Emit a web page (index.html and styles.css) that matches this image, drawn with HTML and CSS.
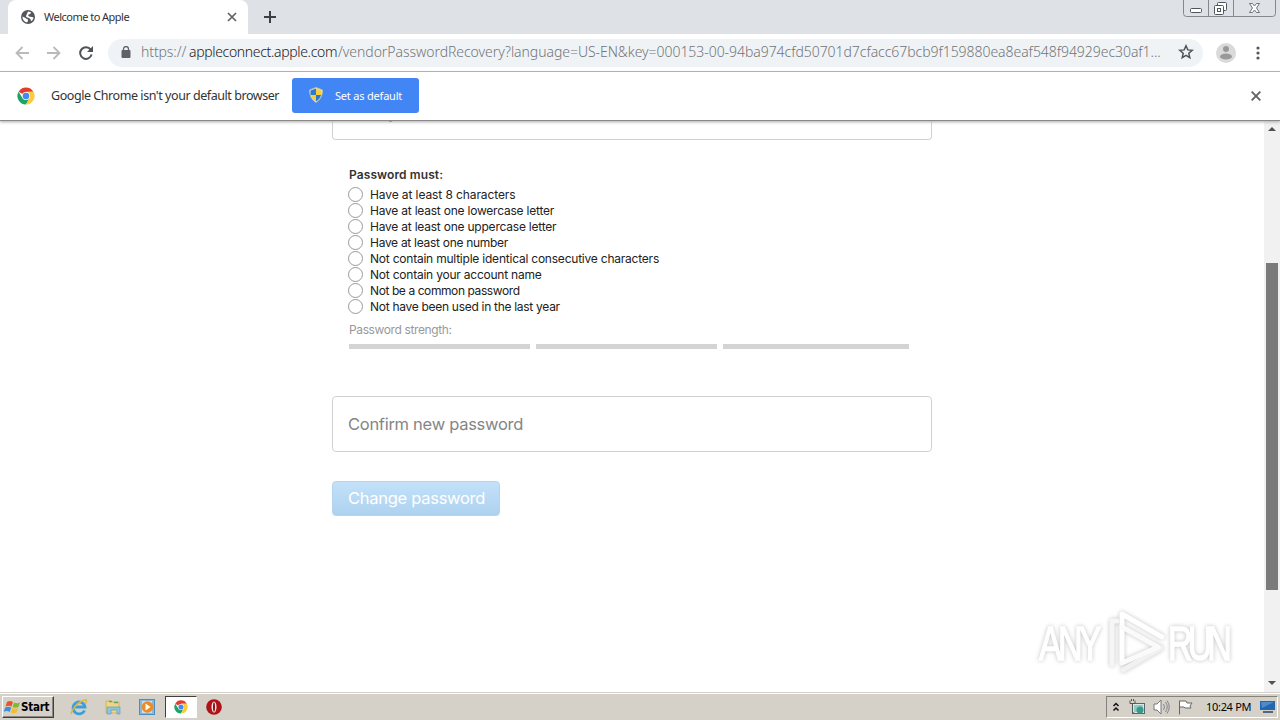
FILE: index.html
```html
<!DOCTYPE html>
<html lang="en">
<head>
<meta charset="utf-8">
<title>Welcome to Apple</title>
<link rel="stylesheet" href="styles.css">
</head>
<body>
<div class="screen">
  <header class="tabstrip">
    <div class="tab">
      <svg class="globe" width="14" height="14" viewBox="0 0 14 14"><circle cx="7" cy="7" r="7" fill="#54585c"/><path d="M1.500 6.500 4.500 8l1.200 1 1.300.5v1.500l-1 1.500C3 11.800 1.300 9.500 1.500 6.500zM7 1.500l3 .7L9.300 4 7.500 4.500 7.200 6 9 6.700l2 .3 1.500.4c-.3 1.800-1 3-2.300 3.800L9.300 9 8 8 5.500 7.200 5 6z" fill="#fff"/></svg>
      <span class="tab-title">Welcome to Apple</span>
      <svg width="10" height="10" viewBox="0 0 10 10"><path d="M1 1l8 8M9 1l-8 8" stroke="#5f6368" stroke-width="1.7"/></svg>
    </div>
    <svg class="plus" width="12" height="12" viewBox="0 0 12 12"><path d="M6 0v12M0 6h12" stroke="#3c4043" stroke-width="2"/></svg>
    <svg class="caption" width="94" height="18" viewBox="0 0 94 18"><path d="M.5 0v13.500q0 3 3 3h86q3 0 3-3V0M25.500 0v16M50.500 0v16" fill="none" stroke="#83878f"/><g fill="#fff" stroke="#50545c"><rect x="7.500" y="8.500" width="11" height="4" rx="1"/><rect x="34.500" y="2.500" width="9" height="8" rx="1"/><rect x="31.500" y="5.500" width="9" height="9" rx="1"/><rect x="34.500" y="8.500" width="3" height="3"/></g><path d="M66.500 3.500h3l2 2.500 2-2.500h3l-3 4.500 3 4.500h-3l-2-2.500-2 2.500h-3l3-4.500z" fill="#fff" stroke="#60646c" stroke-width=".9"/></svg>
  </header>
  <div class="toolbar">
    <svg width="14" height="14" viewBox="0 0 14 14"><path d="M14 7H1.500M7.500 1l-6 6 6 6" fill="none" stroke="#bababa" stroke-width="1.8"/></svg>
    <svg width="14" height="14" viewBox="0 0 14 14"><path d="M0 7h12.500M6.500 1l6 6-6 6" fill="none" stroke="#bababa" stroke-width="1.8"/></svg>
    <svg width="14" height="14" viewBox="0 0 14 14"><path d="M11.700 3.700A5.800 5.800 0 1 0 12.600 8.600" fill="none" stroke="#505357" stroke-width="2"/><path d="M14 0v6H8z" fill="#505357"/></svg>
    <div class="omnibox">
      <svg width="10" height="12" viewBox="0 0 10 12"><rect x=".5" y="4" width="9" height="8" rx="1" fill="#5f6368"/><path d="M2.500 5V3a2.500 2.500 0 0 1 5 0v2" fill="none" stroke="#5f6368" stroke-width="1.300"/></svg>
      <div class="url"><span class="scheme">https://</span><span class="host">appleconnect.apple.com</span><span class="path">/vendorPasswordRecovery?language=US-EN&amp;key=000153-00-94ba974cfd50701d7cfacc67bcb9f159880ea8eaf548f94929ec30af1...</span></div>
      <svg class="star" width="16" height="16" viewBox="0 0 16 16"><path d="M8 1.800l1.800 4.100 4.400.4-3.400 3 1 4.400L8 11.400l-3.800 2.300 1-4.400-3.400-3 4.400-.4z" fill="none" stroke="#4f5357" stroke-width="1.500"/></svg>
    </div>
    <svg class="avatar" width="20" height="20" viewBox="0 0 20 20"><circle cx="10" cy="10" r="10" fill="#dadada"/><circle cx="10" cy="6" r="3" fill="#999"/><ellipse cx="10" cy="13.500" rx="6" ry="3" fill="#999"/></svg>
    <svg class="dots" width="4" height="14" viewBox="0 0 4 14"><g fill="#54585c"><circle cx="2" cy="2" r="1.600"/><circle cx="2" cy="7" r="1.600"/><circle cx="2" cy="12" r="1.600"/></g></svg>
  </div>
  <div class="infobar">
    <svg width="18" height="18" viewBox="0 0 18 18"><use href="#chrome"/></svg>
    <span class="info-text">Google Chrome isn't your default browser</span>
    <button class="default-btn">
      <svg width="14" height="16" viewBox="0 0 14 16"><path d="M7 .5 13.500 3q0 8.500-6.500 12.500Q.5 11.500.5 3z" fill="#eee" stroke="#b5bdb0"/><path d="M7 1.500V8H1.500V3.500zM7 8h5q-1 4-5 6.500z" fill="#3079c8"/><path d="M7 1.500V8h5.500V3.500zM7 8H2q1 4 5 6.500z" fill="#f7cf3a"/></svg>
      <span>Set as default</span>
    </button>
    <svg class="info-close" width="10" height="10" viewBox="0 0 10 10"><path d="M.7.7l8.600 8.600M9.300.7L.7 9.300" stroke="#5f6368" stroke-width="1.900"/></svg>
  </div>
  <div class="viewport">
    <main class="form">
      <div class="field first"><i class="descender"></i></div>
      <section class="rules">
        <h2>Password must:</h2>
        <ul>
          <li class="loose">Have at least 8 characters</li>
          <li>Have at least one lowercase letter</li>
          <li>Have at least one uppercase letter</li>
          <li class="tight">Have at least one number</li>
          <li>Not contain multiple identical consecutive characters</li>
          <li>Not contain your account name</li>
          <li class="tighter">Not be a common password</li>
          <li class="tight">Not have been used in the last year</li>
        </ul>
        <p>Password strength:</p>
        <div class="meter"><i></i><i></i><i></i></div>
      </section>
      <div class="field confirm"><span>Confirm new password</span></div>
      <button class="submit"><span>Change password</span></button>
    </main>
    <div class="scrollbar">
      <svg width="8" height="4" viewBox="0 0 8 4"><path d="M0 4l4-4 4 4z" fill="#505050"/></svg>
      <div class="thumb"></div>
      <svg width="8" height="4" viewBox="0 0 8 4"><path d="M0 0l4 4 4-4z" fill="#505050"/></svg>
    </div>
    <svg class="watermark" width="220" height="74" viewBox="0 0 220 74">
      <defs><linearGradient id="fade" gradientUnits="userSpaceOnUse" x1="0" y1="36" x2="0" y2="44"><stop offset="0" stop-color="#fff"/><stop offset="1" stop-color="#ececec"/></linearGradient></defs>
      <g class="mark-shadow">
        <text class="mark" x="0" y="0" transform="translate(9 57) scale(.71 1)" textLength="88">ANY</text>
        <text class="mark" x="0" y="0" transform="translate(138 57) scale(.71 1)" textLength="90">RUN</text>
        <g fill="none" stroke-linejoin="round" stroke-linecap="round" stroke-width="5"><path d="M82 61V18h5" stroke="#f6f6f6"/><path d="M93 67l38-22" stroke="#f1f1f1"/><path d="M92 58V11l40 23" stroke="#fff"/><path d="M92 24l36 20-36 16" stroke="#fafafa"/></g>
      </g>
    </svg>
  </div>
  <footer class="taskbar">
    <div class="start">
      <svg width="17" height="16" viewBox="0 0 17 16"><path d="M3 3q3-2 6 0L7.500 7.500q-3-1.500-6 0z" fill="#e95527"/><path d="M10 3.500q3 1.500 6 0L14.500 8q-3 1.500-6 0z" fill="#7fb83b"/><path d="M1.200 8.500q3-1.500 6 0L5.700 13q-3-2-6 0z" fill="#3d8fd9"/><path d="M8.200 9q3 1.500 6 0l-1.500 4.500q-3 1.500-6 0z" fill="#f5bd2a"/></svg>
      <span>Start</span>
    </div>
    <div class="quick">
      <svg width="18" height="18" viewBox="0 0 18 18"><path d="M14.500 12.500A6 6 0 1 1 15 9H5" fill="none" stroke="#3aa0dc" stroke-width="2.800"/><path d="M2 15C-1 18 4 7 12 3c6-3 5 0 3 3" fill="none" stroke="#e4b63c" stroke-width="1.500"/></svg>
      <svg width="18" height="18" viewBox="0 0 18 18"><path d="M2 3h5l1 1h7v11H2z" fill="#efd680" stroke="#c9a950" stroke-width=".7"/><path d="M5 3.500h3M10 4.500h4" stroke="#5baa5e" stroke-width="1.500"/><path d="M3 9h13v7h-3v-4H7v4H3z" fill="#8cc4e6" stroke="#5b9dc4" stroke-width=".7"/></svg>
      <svg width="18" height="18" viewBox="0 0 18 18"><rect x="1.500" y="1.500" width="15" height="15" fill="#86b9df" stroke="#4c8dbe"/><rect x="4" y="3" width="10" height="12" fill="#c6e0f0"/><circle cx="9.500" cy="9" r="5.800" fill="#ee8b22"/><path d="M7.500 5.500v7l5-3.500z" fill="#fff"/></svg>
    </div>
    <div class="active-app">
      <svg width="14" height="14" viewBox="0 0 18 18"><g id="chrome"><circle cx="9" cy="9" r="8.500" fill="#fff"/><path d="M9 9 1.600 4.700A8.500 8.500 0 0 1 16.400 4.700L9 4.900z" fill="#e33b2e"/><path d="M1.600 4.700A8.500 8.500 0 0 0 9 17.500L12.600 11 9 9 5.400 11z" fill="#1da462"/><path d="M16.400 4.700H9L12.600 11 9 17.500A8.500 8.500 0 0 0 16.400 4.700z" fill="#fbcb3c"/><circle cx="9" cy="9" r="4" fill="#fff"/><circle cx="9" cy="9" r="3.300" fill="#4688f1"/></g></svg>
    </div>
    <svg class="opera" width="16" height="16" viewBox="0 0 16 16"><circle cx="8" cy="8" r="7.800" fill="#af1318"/><ellipse cx="8" cy="8" rx="2.500" ry="5.500" fill="#f2e9e9"/><ellipse cx="8" cy="8" rx="1" ry="4.800" fill="#8d1014"/></svg>
    <div class="tray">
      <svg width="8" height="10" viewBox="0 0 8 10"><path d="M1.500 4l2.500-2.500L6.500 4M1.500 8.500L4 6l2.500 2.500" fill="none" stroke="#111" stroke-width="1.500"/></svg>
      <svg class="net" width="16" height="16" viewBox="0 0 16 16"><rect x="3.500" y="4.500" width="12" height="10" fill="#dce8e8" stroke="#5b6669"/><rect x="5" y="6" width="9" height="7" fill="#8ccbc8"/><circle cx="11" cy="11" r="3.500" fill="#3a9a8a"/><path d="M1 1.500v3h5v-3M2.500 0v2M4.500 0v2M3.500 4v10h2" fill="none" stroke="#555"/></svg>
      <svg class="sound" width="17" height="16" viewBox="0 0 17 16"><path d="M1 5h3l4-4v14l-4-4H1z" fill="#fff" stroke="#777"/><path d="M10.500 5q2 3 0 6M12.500 3q3.500 5 0 10M14 1.500q4.500 6.500 0 13" fill="none" stroke="#858585"/></svg>
      <svg class="flag" width="16" height="16" viewBox="0 0 16 16"><path d="M2.500 1.500v14M3 2h6l1 2h5l-2 3 1 2H8L7 8H3" fill="#fff" stroke="#666"/></svg>
      <span class="clock">10:24 PM</span>
      <svg class="desk" width="16" height="13" viewBox="0 0 16 13"><path d="M0 1h15v9H0z" fill="#2466b0"/><path d="M1 2h13L2 8z" fill="#4c8ccc"/><path d="M3 12h10" stroke="#23426b" stroke-width="1.500"/></svg>
    </div>
  </footer>
</div>
</body>
</html>
```
FILE: styles.css
```css
*, *::before { box-sizing: border-box; }
body { margin: 0; background: #fff; }
svg { display: block; flex: none; }
.screen { width: 1280px; height: 720px; overflow: hidden; display: flex; flex-direction: column; font-family: "Noto Sans", sans-serif; color: #333; }
.tabstrip { height: 34px; flex: none; background: #dee1e6; display: flex; align-items: flex-start; padding-left: 8px; }
.tab { width: 240px; height: 34px; background: #fff; border-radius: 8px 8px 0 0; display: flex; align-items: center; padding: 0 11px 0 13px; }
.tab-title { flex: 1; margin-left: 9px; font-size: 11px; line-height: 16px; letter-spacing: -.52px; color: #333; white-space: nowrap; }
.plus { margin: 11px 0 0 16px; }
.caption { margin: 0 3px 0 auto; }
.toolbar { height: 38px; flex: none; background: #fff; border-bottom: 1px solid #b0b2b5; display: flex; align-items: center; padding: 0 19px 0 15px; gap: 18px; }
.omnibox { width: 1095px; height: 28px; margin-left: -3px; border-radius: 14px; background: #f0f3f6; display: flex; align-items: center; padding: 0 9px 2px 13px; }
.url { width: 1021px; margin-left: 10px; display: flex; font-size: 14px; line-height: 20px; font-weight: 300; white-space: nowrap; color: #70757a; }
.scheme { width: 48px; letter-spacing: -.1px; }
.host { width: 149px; color: #202124; letter-spacing: -.34px; }
.path { letter-spacing: -.05px; }
.star { margin: 1px 0 0 auto; }
.avatar { margin-left: -5px; }
.dots { margin-left: 2px; }
.infobar { height: 49px; flex: none; background: #fff; border-bottom: 1px solid #898989; display: flex; align-items: center; padding: 0 19px 1px 17px; position: relative; z-index: 1; box-shadow: 0 1px 3px #aaa; }
.info-text { width: 241px; margin-left: 16px; font-size: 12.500px; letter-spacing: -.44px; white-space: nowrap; }
.default-btn { width: 127px; height: 35px; border: 0; border-radius: 3px; background: #4285f4; color: #fff; display: flex; align-items: center; padding: 0 0 1px 17px; gap: 12px; font: 11px "Noto Sans", sans-serif; letter-spacing: -.2px; white-space: nowrap; }
.info-close { margin-left: auto; }
.viewport { height: 571px; flex: none; display: flex; position: relative; background: #fff; }
.form { width: 600px; margin-left: 332px; font-family: Inter, sans-serif; }
.field { border: 1px solid #d2d2d2; border-radius: 4px; }
.first { height: 19px; border-top: 0; border-radius: 0 0 4px 4px; }
.descender { display: block; width: 3px; height: 1px; margin-left: 56px; background: #5b91b0; }
.rules { padding: 26px 0 0 17px; font-size: 12px; }
.rules h2 { margin: 0; font-size: 12px; line-height: 17px; font-weight: 600; letter-spacing: .1px; }
.rules ul { list-style: none; margin: 3px 0 0; padding: 0; }
.rules li { display: flex; align-items: center; height: 16px; color: #222; white-space: nowrap; letter-spacing: -.22px; }
.rules .loose { letter-spacing: -.1px; }
.rules .tight { letter-spacing: -.29px; }
.rules .tighter { letter-spacing: -.41px; }
.rules li::before { content: ""; width: 15px; height: 15px; margin: 0 7px 0 -1px; border: 1px solid #9a9a9a; border-radius: 50%; flex: none; }
.rules p { margin: 7px 0 0; line-height: 18px; color: #999; letter-spacing: -.38px; }
.meter { display: grid; grid-template-columns: 181px 181px 186px; gap: 6px; margin-top: 5px; }
.meter i { height: 5px; background: #d4d4d4; }
.confirm { height: 56px; margin-top: 47px; padding: 0 15px 1px; display: flex; align-items: center; font-size: 16.500px; letter-spacing: -.28px; color: #858585; }
.submit { width: 168px; height: 35px; margin-top: 29px; padding: 0 0 2px 15px; text-align: left; border: 1px solid #b4d4ee; border-radius: 4px; background: linear-gradient(#c3e1f9, #add2f0); color: #fff; font: 16.500px Inter, sans-serif; letter-spacing: -.28px; white-space: nowrap; }
.scrollbar { width: 16px; margin-left: auto; background: #f1f1f1; display: flex; flex-direction: column; align-items: center; padding: 6px 0 7px; }
.thumb { width: 12px; height: 327px; margin: 132px 0 auto; background: #7b7b7b; }
.watermark { position: absolute; left: 1030px; top: 482px; overflow: visible; }
.mark { font: 400 48px "Liberation Sans", sans-serif; fill: url(#fade); stroke: url(#fade); stroke-width: 1.500; }
.mark-shadow { filter: drop-shadow(0 0 2px rgba(0,0,0,.24)); }
.taskbar { height: 28px; flex: none; background: #d5d1c9; border-top: 1px solid #d5d1c9; box-shadow: inset 0 1px #fff; display: flex; align-items: center; padding: 0 2px 0; }
.start { width: 52px; height: 22px; background: #d5d1c9; border: 1px solid; border-color: #fff #404040 #404040 #fff; box-shadow: inset -1px -1px #8a8780; display: flex; align-items: center; gap: 0; padding-left: 1px; font: bold 11.500px "DejaVu Sans Condensed", "DejaVu Sans", sans-serif; color: #000; letter-spacing: -.25px; }
.quick { display: flex; gap: 16px; margin-left: 16px; }
.active-app { width: 32px; height: 22px; margin-left: 9px; background: #fff; border: 1px solid; border-color: #404040 #fff #fff #404040; display: flex; align-items: center; justify-content: center; }
.opera { margin-left: 9px; }
.tray { width: 172px; height: 22px; margin-left: auto; border: 1px solid; border-color: #85827b #fff #fff #85827b; display: flex; align-items: center; padding-left: 5px; }
.net { margin-left: 9px; }
.sound { margin-left: 8px; }
.flag { margin-left: 7px; }
.clock { width: 48px; margin-left: 13px; font-size: 11px; letter-spacing: -.3px; color: #000; white-space: nowrap; }
.desk { margin-left: 6px; }
```
